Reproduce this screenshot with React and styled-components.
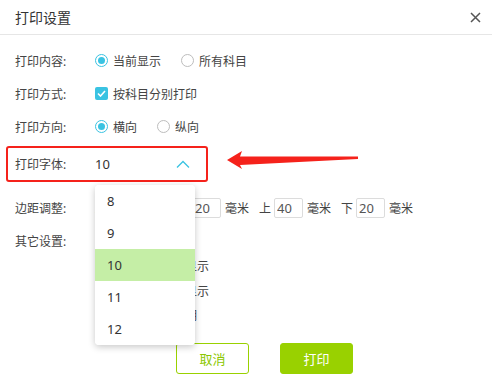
import React from "react";
import styled, { createGlobalStyle } from "styled-components";

const GlobalStyle = createGlobalStyle`
  html, body {
    margin: 0;
    padding: 0;
    background: #fff;
  }
  body {
    font-family: "Noto Sans", "Noto Sans CJK SC", sans-serif;
    font-size: 12px;
    color: #444;
  }
`;

const Dialog = styled.div`
  width: 492px;
  height: 387px;
  background: #fff;
  overflow: hidden;
`;

const Header = styled.header`
  height: 34px;
  display: flex;
  align-items: center;
  justify-content: space-between;
  padding: 0 9px 0 15px;
  border-bottom: 1px solid #e6e6e6;
`;

const Title = styled.h1`
  margin: 0;
  font-size: 14px;
  font-weight: normal;
  color: #333;
`;

const CloseButton = styled.button`
  width: 16px;
  height: 16px;
  padding: 0;
  border: none;
  background: none;
  display: flex;
  align-items: center;
  justify-content: center;
`;

const Body = styled.div`
  padding-top: 9px;
  display: flex;
  flex-direction: column;
`;

const Row = styled.div`
  position: relative;
  display: flex;
  align-items: ${({ $top }) => ($top ? "flex-start" : "center")};
  height: ${({ $height }) => $height || 33}px;
  margin-top: ${({ $mt }) => $mt || 0}px;
  padding-left: 15px;
`;

const HighlightRow = styled(Row)`
  width: 202px;
  box-sizing: border-box;
  height: 36px;
  margin-left: 6px;
  padding-left: 7px;
  padding-right: 16px;
  border: 2px solid #f5221b;
  border-radius: 3px;
`;

const Label = styled.span`
  width: 80px;
  flex: none;
  color: #444;
  line-height: ${({ $lh }) => $lh || "normal"};
`;

const Options = styled.div`
  display: flex;
  align-items: center;
  gap: 20px;
`;

const Option = styled.label`
  display: flex;
  align-items: center;
  gap: 5px;
  color: #444;
  white-space: nowrap;
`;

const RadioDot = styled.span`
  width: 13px;
  height: 13px;
  box-sizing: border-box;
  border-radius: 50%;
  border: 1px solid ${({ $on }) => ($on ? "#3ac3e2" : "#bdbdbd")};
  display: flex;
  align-items: center;
  justify-content: center;

  &::after {
    content: "";
    width: 7px;
    height: 7px;
    border-radius: 50%;
    background: #3ac3e2;
    display: ${({ $on }) => ($on ? "block" : "none")};
  }
`;

const CheckBox = styled.span`
  width: 13px;
  height: 13px;
  box-sizing: border-box;
  border-radius: 2px;
  background: #3ac3e2;
  display: flex;
  align-items: center;
  justify-content: center;
`;

const SelectValue = styled.span`
  flex: 1;
  font-size: 13px;
  color: #333;
`;

const Dropdown = styled.ul`
  position: absolute;
  top: 37px;
  left: 87px;
  width: 100px;
  margin: 0;
  padding: 0;
  list-style: none;
  background: #fff;
  border-radius: 4px;
  box-shadow: 0 2px 7px rgba(0, 0, 0, 0.22);
  overflow: hidden;
  z-index: 10;
`;

const DropItem = styled.li`
  height: 32px;
  line-height: 32px;
  padding-left: 12px;
  font-size: 13px;
  color: #333;
  background: ${({ $active }) => ($active ? "#c5eea6" : "#fff")};
`;

const Arrow = styled.svg`
  position: absolute;
  left: 219px;
  top: 3px;
`;

const FieldGroup = styled.div`
  display: flex;
  align-items: center;
`;

const Side = styled.span`
  margin-right: 3px;
  color: #444;
`;

const NumInput = styled.input`
  width: 29px;
  height: 20px;
  box-sizing: border-box;
  padding: 0 2px;
  border: 1px solid #dcdcdc;
  border-radius: 2px;
  font-family: inherit;
  font-size: 13px;
  color: #555;
  outline: none;
`;

const Unit = styled.span`
  margin: 0 10px 0 4px;
  color: #444;
`;

const CheckList = styled.div`
  display: flex;
  flex-direction: column;
`;

const CheckLine = styled(Option)`
  height: 24.7px;
`;

const Footer = styled.div`
  display: flex;
  gap: 31px;
  margin-top: 14px;
  padding-left: 176px;
`;

const Button = styled.button`
  width: 73px;
  height: 31px;
  border-radius: 3px;
  font-family: inherit;
  font-size: 13px;
  border: 1px solid #99d100;
  color: ${({ $primary }) => ($primary ? "#fff" : "#8cc700")};
  background: ${({ $primary }) => ($primary ? "#99d100" : "#fff")};
`;

function Radio({ on, children }) {
  return (
    <Option>
      <RadioDot $on={on} />
      {children}
    </Option>
  );
}

function Check({ children }) {
  return (
    <CheckLine>
      <CheckBox>
        <svg width="9" height="7" viewBox="0 0 9 7">
          <path d="M1 3.5 L3.5 6 L8 1" fill="none" stroke="#fff" strokeWidth="1.6" />
        </svg>
      </CheckBox>
      {children}
    </CheckLine>
  );
}

function MarginField({ side, value }) {
  return (
    <FieldGroup>
      <Side>{side}</Side>
      <NumInput defaultValue={value} />
      <Unit>毫米</Unit>
    </FieldGroup>
  );
}

export default function App() {
  return (
    <Dialog>
      <GlobalStyle />
      <Header>
        <Title>打印设置</Title>
        <CloseButton>
          <svg width="11" height="11" viewBox="0 0 11 11">
            <path d="M1 1 L10 10 M10 1 L1 10" stroke="#555" strokeWidth="1.5" />
          </svg>
        </CloseButton>
      </Header>

      <Body>
        <Row>
          <Label>打印内容:</Label>
          <Options>
            <Radio on>当前显示</Radio>
            <Radio>所有科目</Radio>
          </Options>
        </Row>
        <Row>
          <Label>打印方式:</Label>
          <Check>按科目分别打印</Check>
        </Row>
        <Row>
          <Label>打印方向:</Label>
          <Options>
            <Radio on>横向</Radio>
            <Radio>纵向</Radio>
          </Options>
        </Row>

        <HighlightRow $mt={3}>
          <Label>打印字体:</Label>
          <SelectValue>10</SelectValue>
          <svg width="14" height="8" viewBox="0 0 14 8">
            <path d="M1 7.5 L7 1.5 L13 7.5" fill="none" stroke="#3ac3e2" strokeWidth="1.3" />
          </svg>
          <Dropdown>
            {[8, 9, 10, 11, 12].map((n) => (
              <DropItem key={n} $active={n === 10}>
                {n}
              </DropItem>
            ))}
          </Dropdown>
          <Arrow width="133" height="20" viewBox="0 0 133 20">
            <path
              d="M0 9 L15 0 L13 5.5 L131 5.5 L131 8 L13 14 L15 18 Z"
              fill="#f5221b"
            />
          </Arrow>
        </HighlightRow>

        <Row $height={34} $mt={9}>
          <Label>边距调整:</Label>
          <MarginField side="左" value="20" />
          <MarginField side="右" value="20" />
          <MarginField side="上" value="40" />
          <MarginField side="下" value="20" />
        </Row>

        <Row $height={100} $mt={4} $top>
          <Label $lh="25px">其它设置:</Label>
          <CheckList>
            <Check>显示科目编码</Check>
            <Check>辅助核算项目显示</Check>
            <Check>外币金额数量显示</Check>
            <Check>打印时间和日期</Check>
          </CheckList>
        </Row>

        <Footer>
          <Button>取消</Button>
          <Button $primary>打印</Button>
        </Footer>
      </Body>
    </Dialog>
  );
}
